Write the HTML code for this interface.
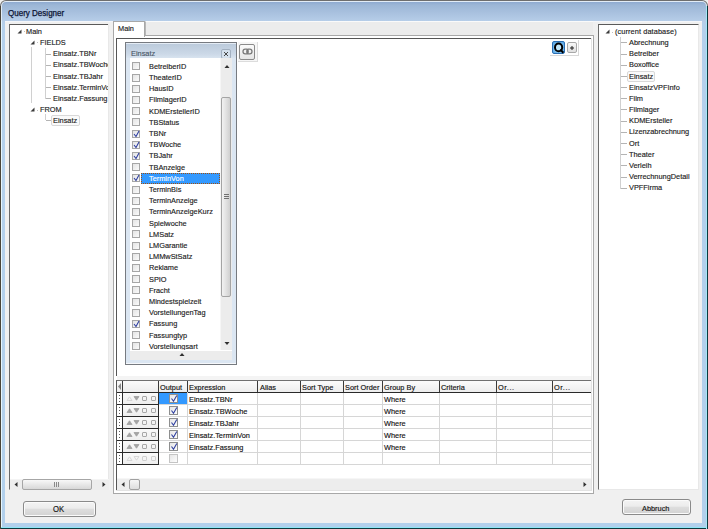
<!DOCTYPE html>
<html><head><meta charset="utf-8"><style>
html,body{margin:0;padding:0;}
body{width:708px;height:529px;overflow:hidden;position:relative;background:#f0f0f0;font-family:"Liberation Sans", sans-serif;}
.b{position:absolute;box-sizing:border-box;}
.t{position:absolute;transform-origin:0 50%;white-space:nowrap;line-height:11px;font-family:"Liberation Sans", sans-serif;-webkit-text-stroke:0.15px currentColor;}
</style></head><body>
<div class="b" style="left:0px;top:0px;width:708px;height:529px;background:#6e6e6e;border-radius:6px 6px 0 0;"></div>
<div class="b" style="left:1px;top:1px;width:706px;height:527px;background:#e2ecf6;border-radius:5px 5px 0 0;"></div>
<div class="b" style="left:2px;top:2px;width:704px;height:525px;background:linear-gradient(#8eaad0 0px,#9cb6d6 3px,#b6cde8 19px,#b4d0ec 24px,#b2d0ec 100%);border-radius:4px 4px 0 0;"></div>
<div class="b" style="left:0px;top:527px;width:708px;height:1px;background:#8ee6f6;"></div>
<div class="b" style="left:0px;top:528px;width:708px;height:1px;background:#0c3a40;"></div>
<div class="b" style="left:706px;top:6px;width:1px;height:523px;background:#a6e6f6;"></div>
<div class="b" style="left:707px;top:6px;width:1px;height:523px;background:#0c3a40;"></div>
<div class="b" style="left:0px;top:6px;width:1px;height:523px;background:#4a4438;"></div>
<div class="b" style="left:1px;top:21px;width:1px;height:506px;background:#e6f6fe;"></div>
<div class="t" style="left:8.20px;top:8.03px;font-size:8.2px;color:#0c1434;letter-spacing:0px;transform:scaleX(0.98);-webkit-text-stroke:0.25px #0c1434;">Query Designer</div>
<div class="b" style="left:5px;top:21px;width:697px;height:502px;background:#f0f0f0;"></div>
<div class="b" style="left:5px;top:21px;width:697px;height:1px;background:#f4f6fa;"></div>
<div class="b" style="left:9px;top:24px;width:100px;height:466px;background:#fff;border-left:1px solid #6a6a6a;border-top:1px solid #5a5a5a;border-right:1px solid #e4e4e4;border-bottom:1px solid #e4e4e4;"></div>
<svg class="b" style="left:16.5px;top:28.5px" width="5" height="5"><path d="M4.5 0.5 L4.5 4.5 L0.5 4.5 Z" fill="#3a3a3a"/></svg>
<div class="b" style="left:23.5px;top:31px;width:1px;height:1px;background:#c0c0c0;"></div>
<div class="t" style="left:26.00px;top:25.70px;font-size:8.0px;color:#1b1b1b;letter-spacing:0px;transform:scaleX(0.92);">Main</div>
<svg class="b" style="left:29.5px;top:39.5px" width="5" height="5"><path d="M4.5 0.5 L4.5 4.5 L0.5 4.5 Z" fill="#3a3a3a"/></svg>
<div class="b" style="left:36.5px;top:42px;width:1px;height:1px;background:#c0c0c0;"></div>
<div class="t" style="left:39.50px;top:36.90px;font-size:8.0px;color:#1b1b1b;letter-spacing:0px;transform:scaleX(0.92);">FIELDS</div>
<div class="b" style="left:31px;top:47px;width:0;height:56px;border-left:1px solid #d0d0d0;"></div>
<div class="b" style="left:45px;top:48px;width:0;height:51px;border-left:1px solid #d0d0d0;"></div>
<div class="b" style="left:46px;top:54px;width:5px;height:1px;background:#b4b4b4;"></div>
<div class="t" style="left:53.00px;top:48.10px;font-size:8.0px;color:#1b1b1b;letter-spacing:0px;transform:scaleX(0.92);">Einsatz.TBNr</div>
<div class="b" style="left:46px;top:65px;width:5px;height:1px;background:#b4b4b4;"></div>
<div class="t" style="left:53.00px;top:59.30px;font-size:8.0px;color:#1b1b1b;letter-spacing:0px;transform:scaleX(0.92);">Einsatz.TBWoche</div>
<div class="b" style="left:46px;top:76px;width:5px;height:1px;background:#b4b4b4;"></div>
<div class="t" style="left:53.00px;top:70.50px;font-size:8.0px;color:#1b1b1b;letter-spacing:0px;transform:scaleX(0.92);">Einsatz.TBJahr</div>
<div class="b" style="left:46px;top:87px;width:5px;height:1px;background:#b4b4b4;"></div>
<div class="t" style="left:53.00px;top:81.70px;font-size:8.0px;color:#1b1b1b;letter-spacing:0px;transform:scaleX(0.92);">Einsatz.TerminVon</div>
<div class="b" style="left:46px;top:98px;width:5px;height:1px;background:#b4b4b4;"></div>
<div class="t" style="left:53.00px;top:92.90px;font-size:8.0px;color:#1b1b1b;letter-spacing:0px;transform:scaleX(0.92);">Einsatz.Fassung</div>
<svg class="b" style="left:29.5px;top:107px" width="5" height="5"><path d="M4.5 0.5 L4.5 4.5 L0.5 4.5 Z" fill="#3a3a3a"/></svg>
<div class="b" style="left:36.5px;top:110px;width:1px;height:1px;background:#c0c0c0;"></div>
<div class="t" style="left:39.50px;top:104.10px;font-size:8.0px;color:#1b1b1b;letter-spacing:0px;transform:scaleX(0.92);">FROM</div>
<div class="b" style="left:45px;top:114px;width:0;height:6px;border-left:1px solid #d0d0d0;"></div>
<div class="b" style="left:46px;top:120px;width:5px;height:1px;background:#b4b4b4;"></div>
<div class="b" style="left:51px;top:115px;width:29px;height:11px;border:1px solid #d8d8d8;border-radius:2px;background:#fafafa;"></div>
<div class="t" style="left:53.00px;top:115.30px;font-size:8.0px;color:#1b1b1b;letter-spacing:0px;transform:scaleX(0.92);">Einsatz</div>
<div class="b" style="left:109px;top:24px;width:4px;height:466px;background:#f0f0f0;"></div>
<div class="b" style="left:108px;top:24px;width:1px;height:466px;background:#e8e8e8;"></div>
<div class="b" style="left:10px;top:479px;width:99px;height:11px;background:#ededed;border-top:1px solid #f4f4f4;"></div>
<svg class="b" style="left:14px;top:482px" width="4" height="5"><path d="M3.5 0 L0.5 2.5 L3.5 5 Z" fill="#303030"/></svg>
<svg class="b" style="left:102px;top:482px" width="4" height="5"><path d="M0.5 0 L3.5 2.5 L0.5 5 Z" fill="#303030"/></svg>
<div class="b" style="left:22px;top:479px;width:70px;height:11px;border:1px solid #a6a6a6;border-radius:2px;background:linear-gradient(#f8f8f8,#e8e8e8 50%,#d8d8d8);"></div>
<div class="b" style="left:54px;top:482px;width:1px;height:5px;background:#8a8a8a;"></div>
<div class="b" style="left:56px;top:482px;width:1px;height:5px;background:#8a8a8a;"></div>
<div class="b" style="left:58px;top:482px;width:1px;height:5px;background:#8a8a8a;"></div>
<div class="b" style="left:145px;top:21px;width:448px;height:15px;background:#ececec;border-top:1px solid #fafafa;border-left:1px solid #b8b8b8;border-bottom:1px solid #a8a8a8;"></div>
<div class="b" style="left:113px;top:35px;width:481px;height:459px;background:#fff;border:1px solid #a8a8a8;"></div>
<div class="b" style="left:113px;top:21px;width:32px;height:16px;background:#fff;border:1px solid #a8a8a8;border-bottom:none;"></div>
<div class="t" style="left:118.00px;top:22.80px;font-size:8.0px;color:#202020;letter-spacing:0px;transform:scaleX(0.92);">Main</div>
<div class="b" style="left:116px;top:38px;width:476px;height:338px;background:#fff;border-left:1px solid #555;border-top:1px solid #555;"></div>
<div class="b" style="left:117px;top:376px;width:475px;height:4px;background:#f4f4f4;"></div>
<div class="b" style="left:125px;top:42px;width:112px;height:323px;background:#dbe6f2;border:1px solid #767a80;"></div>
<div class="b" style="left:126px;top:43px;width:110px;height:1px;background:#e4ecf5;"></div>
<div class="b" style="left:126px;top:44px;width:110px;height:14px;background:linear-gradient(#bccbdc,#cbd8e7 70%,#d8e3ef);"></div>
<div class="t" style="left:131.00px;top:48.30px;font-size:8.0px;color:#4a5868;letter-spacing:0px;transform:scaleX(0.92);">Einsatz</div>
<div class="b" style="left:221px;top:49px;width:10px;height:10px;background:#d4e0ec;border:1px solid #a2b0c0;border-radius:2px;"></div>
<svg class="b" style="left:223px;top:51px" width="6" height="6"><path d="M1 1 L5 5 M5 1 L1 5" stroke="#484848" stroke-width="1"/></svg>
<div class="b" style="left:130px;top:58px;width:102px;height:293px;background:#fff;"></div>
<div class="b" style="left:220px;top:58px;width:12px;height:292px;background:#ececec;border-left:1px solid #f6f6f6;"></div>
<svg class="b" style="left:223.5px;top:65px" width="6" height="3"><path d="M0.5 3 L3 0 L5.5 3 Z" fill="#303030"/></svg>
<svg class="b" style="left:223.5px;top:342px" width="6" height="3"><path d="M0.5 0 L3 3 L5.5 0 Z" fill="#303030"/></svg>
<div class="b" style="left:221px;top:97px;width:10px;height:200px;border:1px solid #a4a4a4;border-radius:2px;background:linear-gradient(90deg,#f2f2f2,#e2e2e2 50%,#d0d0d0);"></div>
<div class="b" style="left:224px;top:194px;width:5px;height:1px;background:#707070;"></div>
<div class="b" style="left:224px;top:196px;width:5px;height:1px;background:#707070;"></div>
<div class="b" style="left:224px;top:198px;width:5px;height:1px;background:#707070;"></div>
<div class="b" style="left:130px;top:351px;width:102px;height:9px;background:#ececec;"></div>
<svg class="b" style="left:178.5px;top:353px" width="6" height="3"><path d="M0.5 3 L3 0 L5.5 3 Z" fill="#303030"/></svg>
<div class="b" style="left:126px;top:363px;width:110px;height:1px;background:#f6f8fb;"></div>
<div class="b" style="left:130px;top:58px;width:90px;height:292px;overflow:hidden;">
<div class="b" style="left:2px;top:4.30px;width:8px;height:8px;border:1px solid #a6a6a6;background:linear-gradient(135deg,#e4e4e4,#fafafa);"></div>
<div class="t" style="left:19.00px;top:2.70px;font-size:8.0px;color:#1b1b1b;letter-spacing:0px;transform:scaleX(0.92);">BetreiberID</div>
<div class="b" style="left:2px;top:15.50px;width:8px;height:8px;border:1px solid #a6a6a6;background:linear-gradient(135deg,#e4e4e4,#fafafa);"></div>
<div class="t" style="left:19.00px;top:13.90px;font-size:8.0px;color:#1b1b1b;letter-spacing:0px;transform:scaleX(0.92);">TheaterID</div>
<div class="b" style="left:2px;top:26.70px;width:8px;height:8px;border:1px solid #a6a6a6;background:linear-gradient(135deg,#e4e4e4,#fafafa);"></div>
<div class="t" style="left:19.00px;top:25.10px;font-size:8.0px;color:#1b1b1b;letter-spacing:0px;transform:scaleX(0.92);">HausID</div>
<div class="b" style="left:2px;top:37.90px;width:8px;height:8px;border:1px solid #a6a6a6;background:linear-gradient(135deg,#e4e4e4,#fafafa);"></div>
<div class="t" style="left:19.00px;top:36.30px;font-size:8.0px;color:#1b1b1b;letter-spacing:0px;transform:scaleX(0.92);">FilmlagerID</div>
<div class="b" style="left:2px;top:49.10px;width:8px;height:8px;border:1px solid #a6a6a6;background:linear-gradient(135deg,#e4e4e4,#fafafa);"></div>
<div class="t" style="left:19.00px;top:47.50px;font-size:8.0px;color:#1b1b1b;letter-spacing:0px;transform:scaleX(0.92);">KDMErstellerID</div>
<div class="b" style="left:2px;top:60.30px;width:8px;height:8px;border:1px solid #a6a6a6;background:linear-gradient(135deg,#e4e4e4,#fafafa);"></div>
<div class="t" style="left:19.00px;top:58.70px;font-size:8.0px;color:#1b1b1b;letter-spacing:0px;transform:scaleX(0.92);">TBStatus</div>
<div class="b" style="left:2px;top:71.50px;width:8px;height:8px;border:1px solid #a6a6a6;background:linear-gradient(135deg,#e4e4e4,#fafafa);"></div>
<svg class="b" style="left:3px;top:71.50px" width="7" height="8"><path d="M1 4 L3 6.5 L6 1" stroke="#3040a0" stroke-width="1.1" fill="none"/></svg>
<div class="t" style="left:19.00px;top:69.90px;font-size:8.0px;color:#1b1b1b;letter-spacing:0px;transform:scaleX(0.92);">TBNr</div>
<div class="b" style="left:2px;top:82.70px;width:8px;height:8px;border:1px solid #a6a6a6;background:linear-gradient(135deg,#e4e4e4,#fafafa);"></div>
<svg class="b" style="left:3px;top:82.70px" width="7" height="8"><path d="M1 4 L3 6.5 L6 1" stroke="#3040a0" stroke-width="1.1" fill="none"/></svg>
<div class="t" style="left:19.00px;top:81.10px;font-size:8.0px;color:#1b1b1b;letter-spacing:0px;transform:scaleX(0.92);">TBWoche</div>
<div class="b" style="left:2px;top:93.90px;width:8px;height:8px;border:1px solid #a6a6a6;background:linear-gradient(135deg,#e4e4e4,#fafafa);"></div>
<svg class="b" style="left:3px;top:93.90px" width="7" height="8"><path d="M1 4 L3 6.5 L6 1" stroke="#3040a0" stroke-width="1.1" fill="none"/></svg>
<div class="t" style="left:19.00px;top:92.30px;font-size:8.0px;color:#1b1b1b;letter-spacing:0px;transform:scaleX(0.92);">TBJahr</div>
<div class="b" style="left:2px;top:105.10px;width:8px;height:8px;border:1px solid #a6a6a6;background:linear-gradient(135deg,#e4e4e4,#fafafa);"></div>
<div class="t" style="left:19.00px;top:103.50px;font-size:8.0px;color:#1b1b1b;letter-spacing:0px;transform:scaleX(0.92);">TBAnzeige</div>
<div class="b" style="left:11px;top:114.80px;width:79px;height:11px;background:#3399ff;border:1px dotted #a05010;"></div>
<div class="b" style="left:2px;top:116.30px;width:8px;height:8px;border:1px solid #a6a6a6;background:linear-gradient(135deg,#e4e4e4,#fafafa);"></div>
<svg class="b" style="left:3px;top:116.30px" width="7" height="8"><path d="M1 4 L3 6.5 L6 1" stroke="#3040a0" stroke-width="1.1" fill="none"/></svg>
<div class="t" style="left:19.00px;top:114.70px;font-size:8.0px;color:#fff;letter-spacing:0px;transform:scaleX(0.92);">TerminVon</div>
<div class="b" style="left:2px;top:127.50px;width:8px;height:8px;border:1px solid #a6a6a6;background:linear-gradient(135deg,#e4e4e4,#fafafa);"></div>
<div class="t" style="left:19.00px;top:125.90px;font-size:8.0px;color:#1b1b1b;letter-spacing:0px;transform:scaleX(0.92);">TerminBis</div>
<div class="b" style="left:2px;top:138.70px;width:8px;height:8px;border:1px solid #a6a6a6;background:linear-gradient(135deg,#e4e4e4,#fafafa);"></div>
<div class="t" style="left:19.00px;top:137.10px;font-size:8.0px;color:#1b1b1b;letter-spacing:0px;transform:scaleX(0.92);">TerminAnzeige</div>
<div class="b" style="left:2px;top:149.90px;width:8px;height:8px;border:1px solid #a6a6a6;background:linear-gradient(135deg,#e4e4e4,#fafafa);"></div>
<div class="t" style="left:19.00px;top:148.30px;font-size:8.0px;color:#1b1b1b;letter-spacing:0px;transform:scaleX(0.92);">TerminAnzeigeKurz</div>
<div class="b" style="left:2px;top:161.10px;width:8px;height:8px;border:1px solid #a6a6a6;background:linear-gradient(135deg,#e4e4e4,#fafafa);"></div>
<div class="t" style="left:19.00px;top:159.50px;font-size:8.0px;color:#1b1b1b;letter-spacing:0px;transform:scaleX(0.92);">Spielwoche</div>
<div class="b" style="left:2px;top:172.30px;width:8px;height:8px;border:1px solid #a6a6a6;background:linear-gradient(135deg,#e4e4e4,#fafafa);"></div>
<div class="t" style="left:19.00px;top:170.70px;font-size:8.0px;color:#1b1b1b;letter-spacing:0px;transform:scaleX(0.92);">LMSatz</div>
<div class="b" style="left:2px;top:183.50px;width:8px;height:8px;border:1px solid #a6a6a6;background:linear-gradient(135deg,#e4e4e4,#fafafa);"></div>
<div class="t" style="left:19.00px;top:181.90px;font-size:8.0px;color:#1b1b1b;letter-spacing:0px;transform:scaleX(0.92);">LMGarantie</div>
<div class="b" style="left:2px;top:194.70px;width:8px;height:8px;border:1px solid #a6a6a6;background:linear-gradient(135deg,#e4e4e4,#fafafa);"></div>
<div class="t" style="left:19.00px;top:193.10px;font-size:8.0px;color:#1b1b1b;letter-spacing:0px;transform:scaleX(0.92);">LMMwStSatz</div>
<div class="b" style="left:2px;top:205.90px;width:8px;height:8px;border:1px solid #a6a6a6;background:linear-gradient(135deg,#e4e4e4,#fafafa);"></div>
<div class="t" style="left:19.00px;top:204.30px;font-size:8.0px;color:#1b1b1b;letter-spacing:0px;transform:scaleX(0.92);">Reklame</div>
<div class="b" style="left:2px;top:217.10px;width:8px;height:8px;border:1px solid #a6a6a6;background:linear-gradient(135deg,#e4e4e4,#fafafa);"></div>
<div class="t" style="left:19.00px;top:215.50px;font-size:8.0px;color:#1b1b1b;letter-spacing:0px;transform:scaleX(0.92);">SPIO</div>
<div class="b" style="left:2px;top:228.30px;width:8px;height:8px;border:1px solid #a6a6a6;background:linear-gradient(135deg,#e4e4e4,#fafafa);"></div>
<div class="t" style="left:19.00px;top:226.70px;font-size:8.0px;color:#1b1b1b;letter-spacing:0px;transform:scaleX(0.92);">Fracht</div>
<div class="b" style="left:2px;top:239.50px;width:8px;height:8px;border:1px solid #a6a6a6;background:linear-gradient(135deg,#e4e4e4,#fafafa);"></div>
<div class="t" style="left:19.00px;top:237.90px;font-size:8.0px;color:#1b1b1b;letter-spacing:0px;transform:scaleX(0.92);">Mindestspielzeit</div>
<div class="b" style="left:2px;top:250.70px;width:8px;height:8px;border:1px solid #a6a6a6;background:linear-gradient(135deg,#e4e4e4,#fafafa);"></div>
<div class="t" style="left:19.00px;top:249.10px;font-size:8.0px;color:#1b1b1b;letter-spacing:0px;transform:scaleX(0.92);">VorstellungenTag</div>
<div class="b" style="left:2px;top:261.90px;width:8px;height:8px;border:1px solid #a6a6a6;background:linear-gradient(135deg,#e4e4e4,#fafafa);"></div>
<svg class="b" style="left:3px;top:261.90px" width="7" height="8"><path d="M1 4 L3 6.5 L6 1" stroke="#3040a0" stroke-width="1.1" fill="none"/></svg>
<div class="t" style="left:19.00px;top:260.30px;font-size:8.0px;color:#1b1b1b;letter-spacing:0px;transform:scaleX(0.92);">Fassung</div>
<div class="b" style="left:2px;top:273.10px;width:8px;height:8px;border:1px solid #a6a6a6;background:linear-gradient(135deg,#e4e4e4,#fafafa);"></div>
<div class="t" style="left:19.00px;top:271.50px;font-size:8.0px;color:#1b1b1b;letter-spacing:0px;transform:scaleX(0.92);">Fassungtyp</div>
<div class="b" style="left:2px;top:284.30px;width:8px;height:8px;border:1px solid #a6a6a6;background:linear-gradient(135deg,#e4e4e4,#fafafa);"></div>
<div class="t" style="left:19.00px;top:282.70px;font-size:8.0px;color:#1b1b1b;letter-spacing:0px;transform:scaleX(0.92);">Vorstellungsart</div>
</div>
<div class="b" style="left:238px;top:42px;width:20px;height:20px;background:#f6f6f6;border-right:1px solid #dcdcdc;border-bottom:1px solid #dcdcdc;"></div>
<div class="b" style="left:239px;top:44px;width:16px;height:16px;border:1px solid #8a8a8a;border-radius:2px;background:linear-gradient(#fafafa,#e6e6e6);"></div>
<svg class="b" style="left:242px;top:48px" width="11" height="7"><path d="M1 3.5 Q1 1.2 3.2 1.2 L4.8 1.2 Q6.2 1.2 6.2 3.5 Q6.2 5.8 4.8 5.8 L3.2 5.8 Q1 5.8 1 3.5 Z M4.8 3.5 Q4.8 1.2 6.2 1.2 L7.8 1.2 Q10 1.2 10 3.5 Q10 5.8 7.8 5.8 L6.2 5.8 Q4.8 5.8 4.8 3.5 Z" stroke="#7a7a7a" stroke-width="1.3" fill="none"/></svg>
<div class="b" style="left:550px;top:40px;width:29px;height:16px;border-right:1px solid #d8d8d8;border-bottom:1px solid #d8d8d8;background:#fff;"></div>
<div class="b" style="left:552px;top:41px;width:13px;height:13px;border:1px solid #2a6eb4;border-radius:2px;background:radial-gradient(circle at 50% 55%,#a8dcfa,#5aa8e6 90%);"></div>
<svg class="b" style="left:552px;top:41px" width="14" height="14"><ellipse cx="6.6" cy="6.4" rx="3.6" ry="3.9" stroke="#000" stroke-width="2" fill="#bfe6fb"/><path d="M8.2 8.6 L11.4 11.8" stroke="#000" stroke-width="2.1"/></svg>
<div class="b" style="left:567px;top:42px;width:10px;height:11px;border:1px solid #a8a8a8;border-radius:2px;background:linear-gradient(#f8f8f8,#e0e0e0);"></div>
<svg class="b" style="left:569px;top:45px" width="6" height="6"><path d="M3 1 L3 5 M1 3 L5 3" stroke="#202020" stroke-width="1"/></svg>
<div class="b" style="left:116px;top:380px;width:476px;height:110px;background:#fff;border-left:1px solid #555;border-top:1px solid #707070;"></div>
<div class="b" style="left:117px;top:381px;width:474px;height:11px;background:linear-gradient(#fbfbfb,#ededed);"></div>
<div class="b" style="left:158px;top:404px;width:433px;height:1px;background:#d6d6d6;"></div>
<div class="b" style="left:158px;top:416px;width:433px;height:1px;background:#d6d6d6;"></div>
<div class="b" style="left:158px;top:428px;width:433px;height:1px;background:#d6d6d6;"></div>
<div class="b" style="left:158px;top:440px;width:433px;height:1px;background:#d6d6d6;"></div>
<div class="b" style="left:158px;top:452px;width:433px;height:1px;background:#d6d6d6;"></div>
<div class="b" style="left:158px;top:464px;width:433px;height:1px;background:#d6d6d6;"></div>
<div class="b" style="left:187px;top:392px;width:1px;height:72px;background:#d6d6d6;"></div>
<div class="b" style="left:257px;top:392px;width:1px;height:72px;background:#d6d6d6;"></div>
<div class="b" style="left:300px;top:392px;width:1px;height:72px;background:#d6d6d6;"></div>
<div class="b" style="left:343px;top:392px;width:1px;height:72px;background:#d6d6d6;"></div>
<div class="b" style="left:382px;top:392px;width:1px;height:72px;background:#d6d6d6;"></div>
<div class="b" style="left:439px;top:392px;width:1px;height:72px;background:#d6d6d6;"></div>
<div class="b" style="left:496px;top:392px;width:1px;height:72px;background:#d6d6d6;"></div>
<div class="b" style="left:552px;top:392px;width:1px;height:72px;background:#d6d6d6;"></div>
<div class="b" style="left:122px;top:381px;width:1px;height:11px;background:#3a3a3a;"></div>
<div class="b" style="left:158px;top:381px;width:1px;height:11px;background:#3a3a3a;"></div>
<div class="b" style="left:187px;top:381px;width:1px;height:11px;background:#3a3a3a;"></div>
<div class="b" style="left:257px;top:381px;width:1px;height:11px;background:#3a3a3a;"></div>
<div class="b" style="left:300px;top:381px;width:1px;height:11px;background:#3a3a3a;"></div>
<div class="b" style="left:343px;top:381px;width:1px;height:11px;background:#3a3a3a;"></div>
<div class="b" style="left:382px;top:381px;width:1px;height:11px;background:#3a3a3a;"></div>
<div class="b" style="left:439px;top:381px;width:1px;height:11px;background:#3a3a3a;"></div>
<div class="b" style="left:496px;top:381px;width:1px;height:11px;background:#3a3a3a;"></div>
<div class="b" style="left:552px;top:381px;width:1px;height:11px;background:#3a3a3a;"></div>
<div class="b" style="left:117px;top:392px;width:474px;height:1px;background:#2a2a2a;"></div>
<div class="b" style="left:122px;top:392px;width:1px;height:73px;background:#2a2a2a;"></div>
<div class="b" style="left:158px;top:392px;width:1px;height:73px;background:#2a2a2a;"></div>
<div class="b" style="left:117px;top:392px;width:42px;height:1px;background:#2a2a2a;"></div>
<div class="b" style="left:117px;top:404px;width:42px;height:1px;background:#2a2a2a;"></div>
<div class="b" style="left:117px;top:416px;width:42px;height:1px;background:#2a2a2a;"></div>
<div class="b" style="left:117px;top:428px;width:42px;height:1px;background:#2a2a2a;"></div>
<div class="b" style="left:117px;top:440px;width:42px;height:1px;background:#2a2a2a;"></div>
<div class="b" style="left:117px;top:452px;width:42px;height:1px;background:#2a2a2a;"></div>
<div class="b" style="left:117px;top:464px;width:42px;height:1px;background:#2a2a2a;"></div>
<div class="b" style="left:187px;top:392px;width:1px;height:72px;background:#d6d6d6;"></div>
<div class="t" style="left:160.00px;top:382.30px;font-size:8.0px;color:#111;letter-spacing:0px;transform:scaleX(0.92);">Output</div>
<div class="t" style="left:188.80px;top:382.30px;font-size:8.0px;color:#111;letter-spacing:0px;transform:scaleX(0.92);">Expression</div>
<div class="t" style="left:260.00px;top:382.30px;font-size:8.0px;color:#111;letter-spacing:0px;transform:scaleX(0.92);">Alias</div>
<div class="t" style="left:302.00px;top:382.30px;font-size:8.0px;color:#111;letter-spacing:0px;transform:scaleX(0.92);">Sort Type</div>
<div class="t" style="left:345.00px;top:382.30px;font-size:8.0px;color:#111;letter-spacing:0px;transform:scaleX(0.92);">Sort Order</div>
<div class="t" style="left:384.20px;top:382.30px;font-size:8.0px;color:#111;letter-spacing:0px;transform:scaleX(0.92);">Group By</div>
<div class="t" style="left:441.00px;top:382.30px;font-size:8.0px;color:#111;letter-spacing:0px;transform:scaleX(0.92);">Criteria</div>
<div class="t" style="left:498.00px;top:382.30px;font-size:8.0px;color:#111;letter-spacing:0.6px;transform:scaleX(0.92);">Or...</div>
<div class="t" style="left:554.00px;top:382.30px;font-size:8.0px;color:#111;letter-spacing:0.6px;transform:scaleX(0.92);">Or...</div>
<svg class="b" style="left:118px;top:383px" width="4" height="7"><path d="M3 0 L0 3.5 L3 7 Z" fill="#8a8a8a"/></svg>
<div class="b" style="left:119px;top:395px;width:1px;height:1px;background:#606060;"></div>
<div class="b" style="left:119px;top:398px;width:1px;height:1px;background:#606060;"></div>
<div class="b" style="left:119px;top:401px;width:1px;height:1px;background:#606060;"></div>
<div class="b" style="left:123px;top:393px;width:35px;height:11px;background:linear-gradient(#fafafa,#eeeeee);"></div>
<svg class="b" style="left:126px;top:396px" width="7" height="5"><path d="M1 4.5 L3.5 0.8 L6 4.5 Z" fill="none" stroke="#d4d4d4" stroke-width="0.9"/></svg>
<svg class="b" style="left:133px;top:396px" width="7" height="5"><path d="M1 0.5 L3.5 4.2 L6 0.5 Z" fill="#a4a4a4" stroke="#a4a4a4" stroke-width="0.9"/></svg>
<div class="b" style="left:142px;top:396px;width:5px;height:5px;border:1px solid #a8a8a8;border-radius:1px;background:#f4f4f4;"></div>
<div class="b" style="left:151px;top:396px;width:5px;height:5px;border:1px solid #a8a8a8;border-radius:1px;background:#f4f4f4;"></div>
<div class="b" style="left:159px;top:393px;width:28px;height:11px;background:#3399ff;"></div>
<div class="b" style="left:169px;top:394px;width:9px;height:9px;border:1px solid #8e8f8f;background:linear-gradient(135deg,#e6e6e6,#fdfdfd);"></div>
<svg class="b" style="left:170px;top:394px" width="8" height="9"><path d="M1.5 4.5 L3.5 7.3 L6.8 1.5" stroke="#3040a0" stroke-width="1.1" fill="none"/></svg>
<div class="t" style="left:188.80px;top:393.90px;font-size:8.0px;color:#111;letter-spacing:0px;transform:scaleX(0.92);">Einsatz.TBNr</div>
<div class="t" style="left:384.20px;top:393.90px;font-size:8.0px;color:#111;letter-spacing:0px;transform:scaleX(0.92);">Where</div>
<div class="b" style="left:119px;top:407px;width:1px;height:1px;background:#606060;"></div>
<div class="b" style="left:119px;top:410px;width:1px;height:1px;background:#606060;"></div>
<div class="b" style="left:119px;top:413px;width:1px;height:1px;background:#606060;"></div>
<div class="b" style="left:123px;top:405px;width:35px;height:11px;background:linear-gradient(#fafafa,#eeeeee);"></div>
<svg class="b" style="left:126px;top:408px" width="7" height="5"><path d="M1 4.5 L3.5 0.8 L6 4.5 Z" fill="#a4a4a4" stroke="#a4a4a4" stroke-width="0.9"/></svg>
<svg class="b" style="left:133px;top:408px" width="7" height="5"><path d="M1 0.5 L3.5 4.2 L6 0.5 Z" fill="#a4a4a4" stroke="#a4a4a4" stroke-width="0.9"/></svg>
<div class="b" style="left:142px;top:408px;width:5px;height:5px;border:1px solid #a8a8a8;border-radius:1px;background:#f4f4f4;"></div>
<div class="b" style="left:151px;top:408px;width:5px;height:5px;border:1px solid #a8a8a8;border-radius:1px;background:#f4f4f4;"></div>
<div class="b" style="left:169px;top:406px;width:9px;height:9px;border:1px solid #8e8f8f;background:linear-gradient(135deg,#e6e6e6,#fdfdfd);"></div>
<svg class="b" style="left:170px;top:406px" width="8" height="9"><path d="M1.5 4.5 L3.5 7.3 L6.8 1.5" stroke="#3040a0" stroke-width="1.1" fill="none"/></svg>
<div class="t" style="left:188.80px;top:405.90px;font-size:8.0px;color:#111;letter-spacing:0px;transform:scaleX(0.92);">Einsatz.TBWoche</div>
<div class="t" style="left:384.20px;top:405.90px;font-size:8.0px;color:#111;letter-spacing:0px;transform:scaleX(0.92);">Where</div>
<div class="b" style="left:119px;top:419px;width:1px;height:1px;background:#606060;"></div>
<div class="b" style="left:119px;top:422px;width:1px;height:1px;background:#606060;"></div>
<div class="b" style="left:119px;top:425px;width:1px;height:1px;background:#606060;"></div>
<div class="b" style="left:123px;top:417px;width:35px;height:11px;background:linear-gradient(#fafafa,#eeeeee);"></div>
<svg class="b" style="left:126px;top:420px" width="7" height="5"><path d="M1 4.5 L3.5 0.8 L6 4.5 Z" fill="#a4a4a4" stroke="#a4a4a4" stroke-width="0.9"/></svg>
<svg class="b" style="left:133px;top:420px" width="7" height="5"><path d="M1 0.5 L3.5 4.2 L6 0.5 Z" fill="#a4a4a4" stroke="#a4a4a4" stroke-width="0.9"/></svg>
<div class="b" style="left:142px;top:420px;width:5px;height:5px;border:1px solid #a8a8a8;border-radius:1px;background:#f4f4f4;"></div>
<div class="b" style="left:151px;top:420px;width:5px;height:5px;border:1px solid #a8a8a8;border-radius:1px;background:#f4f4f4;"></div>
<div class="b" style="left:169px;top:418px;width:9px;height:9px;border:1px solid #8e8f8f;background:linear-gradient(135deg,#e6e6e6,#fdfdfd);"></div>
<svg class="b" style="left:170px;top:418px" width="8" height="9"><path d="M1.5 4.5 L3.5 7.3 L6.8 1.5" stroke="#3040a0" stroke-width="1.1" fill="none"/></svg>
<div class="t" style="left:188.80px;top:417.90px;font-size:8.0px;color:#111;letter-spacing:0px;transform:scaleX(0.92);">Einsatz.TBJahr</div>
<div class="t" style="left:384.20px;top:417.90px;font-size:8.0px;color:#111;letter-spacing:0px;transform:scaleX(0.92);">Where</div>
<div class="b" style="left:119px;top:431px;width:1px;height:1px;background:#606060;"></div>
<div class="b" style="left:119px;top:434px;width:1px;height:1px;background:#606060;"></div>
<div class="b" style="left:119px;top:437px;width:1px;height:1px;background:#606060;"></div>
<div class="b" style="left:123px;top:429px;width:35px;height:11px;background:linear-gradient(#fafafa,#eeeeee);"></div>
<svg class="b" style="left:126px;top:432px" width="7" height="5"><path d="M1 4.5 L3.5 0.8 L6 4.5 Z" fill="#a4a4a4" stroke="#a4a4a4" stroke-width="0.9"/></svg>
<svg class="b" style="left:133px;top:432px" width="7" height="5"><path d="M1 0.5 L3.5 4.2 L6 0.5 Z" fill="#a4a4a4" stroke="#a4a4a4" stroke-width="0.9"/></svg>
<div class="b" style="left:142px;top:432px;width:5px;height:5px;border:1px solid #a8a8a8;border-radius:1px;background:#f4f4f4;"></div>
<div class="b" style="left:151px;top:432px;width:5px;height:5px;border:1px solid #a8a8a8;border-radius:1px;background:#f4f4f4;"></div>
<div class="b" style="left:169px;top:430px;width:9px;height:9px;border:1px solid #8e8f8f;background:linear-gradient(135deg,#e6e6e6,#fdfdfd);"></div>
<svg class="b" style="left:170px;top:430px" width="8" height="9"><path d="M1.5 4.5 L3.5 7.3 L6.8 1.5" stroke="#3040a0" stroke-width="1.1" fill="none"/></svg>
<div class="t" style="left:188.80px;top:429.90px;font-size:8.0px;color:#111;letter-spacing:0px;transform:scaleX(0.92);">Einsatz.TerminVon</div>
<div class="t" style="left:384.20px;top:429.90px;font-size:8.0px;color:#111;letter-spacing:0px;transform:scaleX(0.92);">Where</div>
<div class="b" style="left:119px;top:443px;width:1px;height:1px;background:#606060;"></div>
<div class="b" style="left:119px;top:446px;width:1px;height:1px;background:#606060;"></div>
<div class="b" style="left:119px;top:449px;width:1px;height:1px;background:#606060;"></div>
<div class="b" style="left:123px;top:441px;width:35px;height:11px;background:linear-gradient(#fafafa,#eeeeee);"></div>
<svg class="b" style="left:126px;top:444px" width="7" height="5"><path d="M1 4.5 L3.5 0.8 L6 4.5 Z" fill="#a4a4a4" stroke="#a4a4a4" stroke-width="0.9"/></svg>
<svg class="b" style="left:133px;top:444px" width="7" height="5"><path d="M1 0.5 L3.5 4.2 L6 0.5 Z" fill="#a4a4a4" stroke="#a4a4a4" stroke-width="0.9"/></svg>
<div class="b" style="left:142px;top:444px;width:5px;height:5px;border:1px solid #a8a8a8;border-radius:1px;background:#f4f4f4;"></div>
<div class="b" style="left:151px;top:444px;width:5px;height:5px;border:1px solid #a8a8a8;border-radius:1px;background:#f4f4f4;"></div>
<div class="b" style="left:169px;top:442px;width:9px;height:9px;border:1px solid #8e8f8f;background:linear-gradient(135deg,#e6e6e6,#fdfdfd);"></div>
<svg class="b" style="left:170px;top:442px" width="8" height="9"><path d="M1.5 4.5 L3.5 7.3 L6.8 1.5" stroke="#3040a0" stroke-width="1.1" fill="none"/></svg>
<div class="t" style="left:188.80px;top:441.90px;font-size:8.0px;color:#111;letter-spacing:0px;transform:scaleX(0.92);">Einsatz.Fassung</div>
<div class="t" style="left:384.20px;top:441.90px;font-size:8.0px;color:#111;letter-spacing:0px;transform:scaleX(0.92);">Where</div>
<div class="b" style="left:119px;top:455px;width:1px;height:1px;background:#606060;"></div>
<div class="b" style="left:119px;top:458px;width:1px;height:1px;background:#606060;"></div>
<div class="b" style="left:119px;top:461px;width:1px;height:1px;background:#606060;"></div>
<div class="b" style="left:123px;top:453px;width:35px;height:11px;background:linear-gradient(#fafafa,#eeeeee);"></div>
<svg class="b" style="left:126px;top:456px" width="7" height="5"><path d="M1 4.5 L3.5 0.8 L6 4.5 Z" fill="none" stroke="#d4d4d4" stroke-width="0.9"/></svg>
<svg class="b" style="left:133px;top:456px" width="7" height="5"><path d="M1 0.5 L3.5 4.2 L6 0.5 Z" fill="none" stroke="#d4d4d4" stroke-width="0.9"/></svg>
<div class="b" style="left:142px;top:456px;width:5px;height:5px;border:1px solid #d0d0d0;border-radius:1px;background:#f4f4f4;"></div>
<div class="b" style="left:151px;top:456px;width:5px;height:5px;border:1px solid #d0d0d0;border-radius:1px;background:#f4f4f4;"></div>
<div class="b" style="left:169px;top:454px;width:9px;height:9px;border:1px solid #c4c4c4;background:linear-gradient(135deg,#e6e6e6,#fdfdfd);"></div>
<div class="b" style="left:117px;top:478px;width:474px;height:12px;background:#ededed;border-top:1px solid #f6f6f6;"></div>
<svg class="b" style="left:121px;top:482px" width="4" height="5"><path d="M3.5 0 L0.5 2.5 L3.5 5 Z" fill="#303030"/></svg>
<svg class="b" style="left:583px;top:482px" width="4" height="5"><path d="M0.5 0 L3.5 2.5 L0.5 5 Z" fill="#303030"/></svg>
<div class="b" style="left:129px;top:479px;width:11px;height:11px;border:1px solid #a0a0a0;border-radius:2px;background:linear-gradient(#f6f6f6,#dedede);"></div>
<div class="b" style="left:591px;top:38px;width:1px;height:453px;background:#e2e2e2;"></div>
<div class="b" style="left:116px;top:490px;width:476px;height:1px;background:#e2e2e2;"></div>
<div class="b" style="left:598px;top:24px;width:101px;height:466px;background:#fff;border-left:1px solid #6a6a6a;border-top:1px solid #5a5a5a;border-right:1px solid #e8e8e8;border-bottom:1px solid #e8e8e8;"></div>
<svg class="b" style="left:605px;top:29px" width="5" height="5"><path d="M4.5 0.5 L4.5 4.5 L0.5 4.5 Z" fill="#3a3a3a"/></svg>
<div class="b" style="left:612px;top:31.5px;width:1px;height:1px;background:#c0c0c0;"></div>
<div class="t" style="left:615.40px;top:25.90px;font-size:8.0px;color:#1b1b1b;letter-spacing:0.1px;transform:scaleX(0.92);">(current database)</div>
<div class="b" style="left:620px;top:37px;width:0;height:152px;border-left:1px solid #d0d0d0;"></div>
<div class="b" style="left:621px;top:42px;width:6px;height:1px;background:#b4b4b4;"></div>
<div class="t" style="left:629.00px;top:37.07px;font-size:8.0px;color:#1b1b1b;letter-spacing:0px;transform:scaleX(0.92);">Abrechnung</div>
<div class="b" style="left:621px;top:54px;width:6px;height:1px;background:#b4b4b4;"></div>
<div class="t" style="left:629.00px;top:48.24px;font-size:8.0px;color:#1b1b1b;letter-spacing:0px;transform:scaleX(0.92);">Betreiber</div>
<div class="b" style="left:621px;top:65px;width:6px;height:1px;background:#b4b4b4;"></div>
<div class="t" style="left:629.00px;top:59.41px;font-size:8.0px;color:#1b1b1b;letter-spacing:0px;transform:scaleX(0.92);">Boxoffice</div>
<div class="b" style="left:621px;top:76px;width:6px;height:1px;background:#b4b4b4;"></div>
<div class="b" style="left:627px;top:70.67999999999999px;width:28px;height:11px;border:1px solid #d8d8d8;border-radius:2px;background:#fafafa;"></div>
<div class="t" style="left:629.00px;top:70.58px;font-size:8.0px;color:#1b1b1b;letter-spacing:0px;transform:scaleX(0.92);">Einsatz</div>
<div class="b" style="left:621px;top:87px;width:6px;height:1px;background:#b4b4b4;"></div>
<div class="t" style="left:629.00px;top:81.75px;font-size:8.0px;color:#1b1b1b;letter-spacing:0px;transform:scaleX(0.92);">EinsatzVPFInfo</div>
<div class="b" style="left:621px;top:98px;width:6px;height:1px;background:#b4b4b4;"></div>
<div class="t" style="left:629.00px;top:92.92px;font-size:8.0px;color:#1b1b1b;letter-spacing:0px;transform:scaleX(0.92);">Film</div>
<div class="b" style="left:621px;top:109px;width:6px;height:1px;background:#b4b4b4;"></div>
<div class="t" style="left:629.00px;top:104.09px;font-size:8.0px;color:#1b1b1b;letter-spacing:0px;transform:scaleX(0.92);">Filmlager</div>
<div class="b" style="left:621px;top:121px;width:6px;height:1px;background:#b4b4b4;"></div>
<div class="t" style="left:629.00px;top:115.26px;font-size:8.0px;color:#1b1b1b;letter-spacing:0px;transform:scaleX(0.92);">KDMErsteller</div>
<div class="b" style="left:621px;top:132px;width:6px;height:1px;background:#b4b4b4;"></div>
<div class="t" style="left:629.00px;top:126.43px;font-size:8.0px;color:#1b1b1b;letter-spacing:0px;transform:scaleX(0.92);">Lizenzabrechnung</div>
<div class="b" style="left:621px;top:143px;width:6px;height:1px;background:#b4b4b4;"></div>
<div class="t" style="left:629.00px;top:137.60px;font-size:8.0px;color:#1b1b1b;letter-spacing:0px;transform:scaleX(0.92);">Ort</div>
<div class="b" style="left:621px;top:154px;width:6px;height:1px;background:#b4b4b4;"></div>
<div class="t" style="left:629.00px;top:148.77px;font-size:8.0px;color:#1b1b1b;letter-spacing:0px;transform:scaleX(0.92);">Theater</div>
<div class="b" style="left:621px;top:165px;width:6px;height:1px;background:#b4b4b4;"></div>
<div class="t" style="left:629.00px;top:159.94px;font-size:8.0px;color:#1b1b1b;letter-spacing:0px;transform:scaleX(0.92);">Verleih</div>
<div class="b" style="left:621px;top:177px;width:6px;height:1px;background:#b4b4b4;"></div>
<div class="t" style="left:629.00px;top:171.11px;font-size:8.0px;color:#1b1b1b;letter-spacing:0px;transform:scaleX(0.92);">VerrechnungDetail</div>
<div class="b" style="left:621px;top:188px;width:6px;height:1px;background:#b4b4b4;"></div>
<div class="t" style="left:629.00px;top:182.28px;font-size:8.0px;color:#1b1b1b;letter-spacing:0px;transform:scaleX(0.92);">VPFFirma</div>
<div class="b" style="left:23px;top:501px;width:73px;height:16px;border:1px solid #8a8a8a;border-radius:3px;box-shadow:inset 0 0 0 1px #fbfbfb;background:linear-gradient(#f4f4f4 0%,#ececec 45%,#dedede 50%,#d2d2d2 100%);"></div>
<div class="t" style="left:53.20px;top:503.86px;font-size:8.4px;color:#151515;letter-spacing:0px;transform:scaleX(0.92);">OK</div>
<div class="b" style="left:622px;top:499px;width:69px;height:16px;border:1px solid #8a8a8a;border-radius:3px;box-shadow:inset 0 0 0 1px #fbfbfb;background:linear-gradient(#f4f4f4 0%,#ececec 45%,#dedede 50%,#d2d2d2 100%);"></div>
<div class="t" style="left:642.30px;top:502.90px;font-size:8.0px;color:#151515;letter-spacing:0px;transform:scaleX(0.92);">Abbruch</div>
</body></html>
